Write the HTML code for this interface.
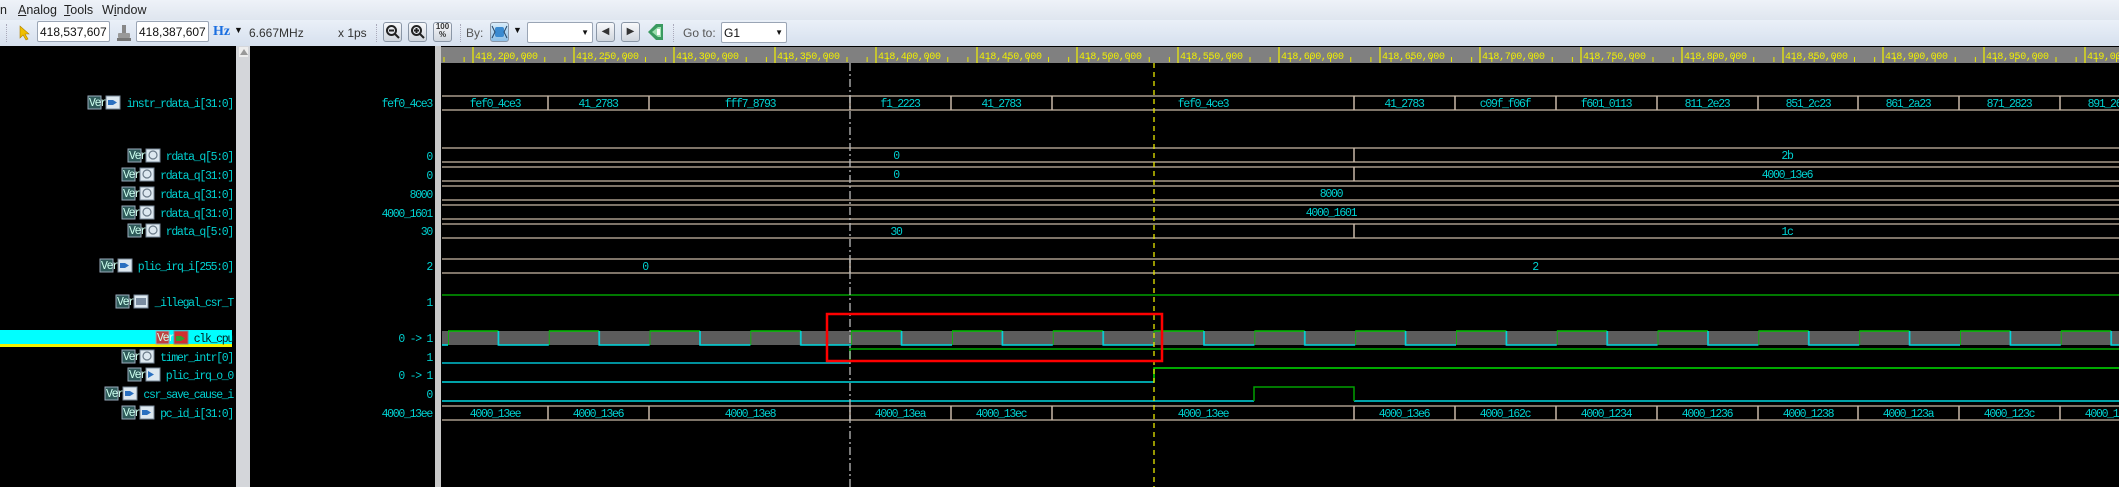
<!DOCTYPE html>
<html><head><meta charset="utf-8"><style>
body{margin:0;width:2119px;height:487px;overflow:hidden;background:#000;font-family:"Liberation Sans",sans-serif;position:relative}
#menu{position:absolute;left:0;top:0;width:2119px;height:20px;background:linear-gradient(#eef2f8,#dfe6ef);font-size:12.5px;color:#222}
#menu span{position:absolute;top:3px}
#tb{position:absolute;left:0;top:20px;width:2119px;height:26px;background:linear-gradient(#eaf0f8,#d6e0ee);font-size:12px;color:#333}
#tb .a{position:absolute}
.inp{background:#fff;border:1px solid #9aa5b5;border-radius:2px;height:21px;top:1px;line-height:20px;font-size:12px;padding-left:2px;box-sizing:border-box;color:#111;white-space:nowrap;overflow:hidden}
.btn{top:2px;width:19px;height:20px;border:1px solid #8a96a6;border-radius:3px;background:linear-gradient(#f8f9fb,#d0d6de);box-sizing:border-box}
.sep{top:4px;width:2px;height:18px;border-left:1px dotted #aab}
svg text{font-family:"Liberation Mono",monospace;font-size:11.5px;letter-spacing:-1.3px;font-weight:normal}
svg .r text{font-size:10px;letter-spacing:-0.3px}
</style></head><body>
<div id="menu"><span style="left:0">n</span><span style="left:18px"><u>A</u>nalog</span><span style="left:64px"><u>T</u>ools</span><span style="left:102px">W<u>i</u>ndow</span></div>
<div id="tb">
<div class="a sep" style="left:6px"></div>
<svg class="a" style="left:18px;top:5px" width="12" height="16"><path d="M2 1 L2 13 L5 10 L8 15 L10 14 L7 9 L11 9 Z" fill="#f0c000" stroke="#b08000" stroke-width=".6"/></svg>
<div class="a inp" style="left:37px;width:73px">418,537,607</div>
<svg class="a" style="left:116px;top:4px" width="16" height="18"><rect x="6" y="1" width="4" height="9" fill="#888"/><rect x="2" y="9" width="12" height="5" rx="1" fill="#999"/><rect x="1" y="14" width="14" height="3" fill="#777"/></svg>
<div class="a inp" style="left:136px;width:73px">418,387,607</div>
<div class="a" style="left:213px;top:4px;color:#1a6ee0;font-weight:bold;font-family:'Liberation Serif',serif;font-size:14px">Hz</div>
<div class="a" style="left:234px;top:5px;font-size:9px;color:#111">▼</div>
<div class="a" style="left:249px;top:6px">6.667MHz</div>
<div class="a" style="left:338px;top:6px">x 1ps</div>
<div class="a sep" style="left:376px"></div>
<div class="a btn" style="left:383px"><svg width="17" height="18"><circle cx="7.5" cy="7.5" r="4.5" fill="none" stroke="#222" stroke-width="2"/><path d="M5 7.5h5M11 11l4 4" stroke="#222" stroke-width="2"/></svg></div>
<div class="a btn" style="left:408px"><svg width="17" height="18"><circle cx="7.5" cy="7.5" r="4.5" fill="none" stroke="#222" stroke-width="2"/><path d="M5 7.5h5M7.5 5v5M11 11l4 4" stroke="#222" stroke-width="2"/></svg></div>
<div class="a btn" style="left:433px;font-size:8px;line-height:8px;text-align:center;color:#333;font-weight:bold">100<br>%</div>
<div class="a sep" style="left:460px"></div>
<div class="a" style="left:466px;top:6px;color:#555">By:</div>
<div class="a btn" style="left:490px;background:linear-gradient(#d8ecfa,#8fc0e8)"><svg width="17" height="18"><rect x="4" y="4" width="9" height="10" rx="2" fill="#3a8ad0"/><path d="M1 3l3 6-3 6M16 3l-3 6 3 6" stroke="#246" fill="none"/></svg></div>
<div class="a" style="left:513px;top:5px;font-size:9px;color:#111">▼</div>
<div class="a inp" style="left:527px;width:66px;top:2px"><span style="position:absolute;right:3px;top:0;font-size:8px">▼</span></div>
<div class="a btn" style="left:596px;font-size:10px;text-align:center;line-height:18px;color:#333">◀</div>
<div class="a btn" style="left:621px;font-size:10px;text-align:center;line-height:18px;color:#333">▶</div>
<svg class="a" style="left:646px;top:2px" width="19" height="21"><path d="M2 10 L10 2 L17 2 L17 18 L10 18 Z" fill="#3a9a60"/><path d="M6 10 L12 5 L15 5 L15 15 L12 15 Z" fill="#9ee0b0"/><rect x="11" y="7" width="3" height="6" fill="#fff"/></svg>
<div class="a sep" style="left:673px"></div>
<div class="a" style="left:683px;top:6px;color:#555">Go to:</div>
<div class="a inp" style="left:721px;width:66px;top:2px">G1<span style="position:absolute;right:3px;top:0;font-size:8px">▼</span></div>
</div>

<svg style="position:absolute;left:0;top:0" width="2119" height="487">
<defs>
<pattern id="clk" patternUnits="userSpaceOnUse" x="448" y="0" width="100.8" height="487">
<path d="M0 331H50.4" stroke="#00c000" stroke-width="1.6"/><path d="M0 331V345" stroke="#00c000" stroke-width="1.6"/>
<path d="M50.4 331V345H100.8" stroke="#00d8e0" stroke-width="1.6" fill="none"/>
</pattern>
<pattern id="tk" patternUnits="userSpaceOnUse" x="443" y="0" width="20.15" height="487"><path d="M1 57V62" stroke="#e8e800" stroke-width="1"/></pattern>
</defs>
<rect x="236" y="46" width="14" height="441" fill="#d4d6da"/>
<rect x="239" y="47" width="9" height="10" fill="#eee"/><path d="M240 55l4-6 4 6z" fill="#999"/>
<rect x="435" y="46" width="6" height="441" fill="#c8c8c8"/>
<rect x="441" y="47" width="1678" height="16" fill="#808080"/>
<rect x="441" y="47" width="1678" height="16" fill="url(#tk)"/>
<g stroke="#f0f000" stroke-width="1.2">
<path d="M473 47V63M574 47V63M674 47V63M775 47V63M876 47V63M977 47V63M1077 47V63M1178 47V63M1279 47V63M1380 47V63M1480 47V63M1581 47V63M1682 47V63M1783 47V63M1883 47V63M1984 47V63M2085 47V63"/>
</g>
<g fill="#f0f000" class="r">
<text x="475" y="59">418,200,000</text><text x="576" y="59">418,250,000</text><text x="676" y="59">418,300,000</text><text x="777" y="59">418,350,000</text><text x="878" y="59">418,400,000</text><text x="979" y="59">418,450,000</text><text x="1079" y="59">418,500,000</text><text x="1180" y="59">418,550,000</text><text x="1281" y="59">418,600,000</text><text x="1382" y="59">418,650,000</text><text x="1482" y="59">418,700,000</text><text x="1583" y="59">418,750,000</text><text x="1684" y="59">418,800,000</text><text x="1785" y="59">418,850,000</text><text x="1885" y="59">418,900,000</text><text x="1986" y="59">418,950,000</text><text x="2087" y="59">419,000,000</text>
</g>

<rect x="0" y="330" width="232" height="14" fill="#00ffff"/>
<rect x="0" y="344" width="232" height="3" fill="#f0f000"/>
<g fill="#00d0d0" text-anchor="end">
<text x="233" y="107">instr_rdata_i[31:0]</text>
<text x="233" y="160">rdata_q[5:0]</text>
<text x="233" y="179">rdata_q[31:0]</text>
<text x="233" y="198">rdata_q[31:0]</text>
<text x="233" y="217">rdata_q[31:0]</text>
<text x="233" y="235">rdata_q[5:0]</text>
<text x="233" y="270">plic_irq_i[255:0]</text>
<text x="233" y="306">_illegal_csr_T</text>
<text x="233" y="342" fill="#002020">clk_cpu</text>
<text x="233" y="361">timer_intr[0]</text>
<text x="233" y="379">plic_irq_o_0</text>
<text x="233" y="398">csr_save_cause_i</text>
<text x="233" y="417">pc_id_i[31:0]</text>
</g>
<g>
<g fill="#2f5a5a" stroke="#9ab" stroke-width="1">
<rect x="88" y="96" width="13" height="13"/><rect x="128" y="149" width="13" height="13"/><rect x="122" y="168" width="13" height="13"/><rect x="122" y="187" width="13" height="13"/><rect x="122" y="206" width="13" height="13"/><rect x="128" y="224" width="13" height="13"/><rect x="100" y="259" width="13" height="13"/><rect x="116" y="295" width="13" height="13"/><rect x="156" y="331" width="13" height="13" fill="#c04040"/><rect x="122" y="350" width="13" height="13"/><rect x="128" y="368" width="13" height="13"/><rect x="105" y="387" width="13" height="13"/><rect x="122" y="406" width="13" height="13"/>
</g>
<g fill="#cfe" style="font-size:6.5px;letter-spacing:-0.6px">
<text x="89" y="106">Ver</text><text x="129" y="159">Ver</text><text x="123" y="178">Ver</text><text x="123" y="197">Ver</text><text x="123" y="216">Ver</text><text x="129" y="234">Ver</text><text x="101" y="269">Ver</text><text x="117" y="305">Ver</text><text x="157" y="341">Ver</text><text x="123" y="360">Ver</text><text x="129" y="378">Ver</text><text x="106" y="397">Ver</text><text x="123" y="416">Ver</text>
</g>
<g fill="#dde8f0" stroke="#789" stroke-width="1">
<rect x="106" y="96" width="14" height="13"/><rect x="146" y="149" width="14" height="13"/><rect x="140" y="168" width="14" height="13"/><rect x="140" y="187" width="14" height="13"/><rect x="140" y="206" width="14" height="13"/><rect x="146" y="224" width="14" height="13"/><rect x="118" y="259" width="14" height="13"/><rect x="134" y="295" width="14" height="13"/><rect x="174" y="331" width="14" height="13" fill="#d03030"/><rect x="140" y="350" width="14" height="13"/><rect x="146" y="368" width="14" height="13"/><rect x="123" y="387" width="14" height="13"/><rect x="140" y="406" width="14" height="13"/>
</g>
<g fill="#2a70c0">
<path d="M108 100h5l4 2.5-4 2.5h-5z"/><path d="M120 263h5l4 2.5-4 2.5h-5z"/><path d="M125 391h5l4 2.5-4 2.5h-5z"/><path d="M142 410h5l4 2.5-4 2.5h-5z"/><path d="M148 371v7l6-3.5z"/><path d="M176 336h5l4 2.5-4 2.5h-5z" fill="#30a030"/>
</g>
<g fill="none" stroke="#6a7a88" stroke-width="1.2"><circle cx="153" cy="155" r="4"/><circle cx="147" cy="174" r="4"/><circle cx="147" cy="193" r="4"/><circle cx="147" cy="212" r="4"/><circle cx="153" cy="230" r="4"/><circle cx="147" cy="356" r="4"/></g>
<rect x="136" y="298" width="10" height="7" fill="#7a8ca0"/>
</g>

<g fill="#00d0d0" text-anchor="end">
<text x="432" y="107">fef0_4ce3</text><text x="432" y="160">0</text><text x="432" y="179">0</text><text x="432" y="198">8000</text><text x="432" y="217">4000_1601</text><text x="432" y="235">30</text><text x="432" y="270">2</text><text x="432" y="306">1</text><text x="432" y="342">0 -&gt; 1</text><text x="432" y="361">1</text><text x="432" y="379">0 -&gt; 1</text><text x="432" y="398">0</text><text x="432" y="417">4000_13ee</text>
</g>

<g stroke="#a89a8a" stroke-width="1.4">
<path d="M442 96H2119M442 110H2119"/>
<path d="M442 148H2119M442 162H2119M442 167H2119M442 181H2119M442 186H2119M442 200H2119M442 205H2119M442 219H2119M442 224H2119M442 238H2119"/>
<path d="M442 259H2119M442 273H2119"/>
<path d="M442 406H2119M442 420H2119"/>
</g>
<g stroke="#c8b8a8" stroke-width="1.5">
<path d="M548 96V110M649 96V110M850 96V110M951 96V110M1052 96V110M1354 96V110M1455 96V110M1556 96V110M1657 96V110M1758 96V110M1858 96V110M1959 96V110M2060 96V110"/>
<path d="M548 406V420M649 406V420M850 406V420M951 406V420M1052 406V420M1354 406V420M1455 406V420M1556 406V420M1657 406V420M1758 406V420M1858 406V420M1959 406V420M2060 406V420"/>
<path d="M1354 148V162M1354 167V181M1354 224V238M850 259V273"/>
</g>
<g fill="#00d0d0" text-anchor="middle">
<text x="495" y="107">fef0_4ce3</text><text x="598" y="107">41_2783</text><text x="750" y="107">fff7_8793</text><text x="900" y="107">f1_2223</text><text x="1001" y="107">41_2783</text><text x="1203" y="107">fef0_4ce3</text><text x="1404" y="107">41_2783</text><text x="1505" y="107">c09f_f06f</text><text x="1606" y="107">f601_0113</text><text x="1707" y="107">811_2e23</text><text x="1808" y="107">851_2c23</text><text x="1908" y="107">861_2a23</text><text x="2009" y="107">871_2823</text><text x="2110" y="107">891_2623</text>
<text x="896" y="159">0</text><text x="1787" y="159">2b</text>
<text x="896" y="178">0</text><text x="1787" y="178">4000_13e6</text>
<text x="1331" y="197">8000</text><text x="1331" y="216">4000_1601</text>
<text x="896" y="235">30</text><text x="1787" y="235">1c</text>
<text x="645" y="270">0</text><text x="1535" y="270">2</text>
<text x="495" y="417">4000_13ee</text><text x="598" y="417">4000_13e6</text><text x="750" y="417">4000_13e8</text><text x="900" y="417">4000_13ea</text><text x="1001" y="417">4000_13ec</text><text x="1203" y="417">4000_13ee</text><text x="1404" y="417">4000_13e6</text><text x="1505" y="417">4000_162c</text><text x="1606" y="417">4000_1234</text><text x="1707" y="417">4000_1236</text><text x="1808" y="417">4000_1238</text><text x="1908" y="417">4000_123a</text><text x="2009" y="417">4000_123c</text><text x="2110" y="417">4000_123e</text>
</g>

<path d="M442 295H2119" stroke="#00a000" stroke-width="1.5"/>
<rect x="442" y="331" width="1677" height="14" fill="#5c5c5c"/>
<path d="M442 345H448" stroke="#00d8e0" stroke-width="1.6"/>
<rect x="448" y="328" width="1671" height="20" fill="url(#clk)"/>
<path d="M442 363H850" stroke="#00c0d0" stroke-width="1.5"/>
<path d="M850 363V349H2119" stroke="#00b000" stroke-width="1.5" fill="none"/>
<path d="M442 382H1154" stroke="#00d8e0" stroke-width="1.5"/>
<path d="M1154 382V368H2119" stroke="#00e000" stroke-width="1.5" fill="none"/>
<path d="M442 401H1254M1354 401H2119" stroke="#00d8e0" stroke-width="1.5"/>
<path d="M1254 401V387H1354V401" stroke="#00a000" stroke-width="1.5" fill="none"/>

<path d="M850 63V487" stroke="#bbb" stroke-width="1.3" stroke-dasharray="8 3 2 3"/>
<path d="M1154 63V487" stroke="#e8e800" stroke-width="1.3" stroke-dasharray="5 4"/>
<rect x="827" y="314" width="335" height="47" fill="none" stroke="#ff0000" stroke-width="2.5"/>
</svg>
</body></html>
